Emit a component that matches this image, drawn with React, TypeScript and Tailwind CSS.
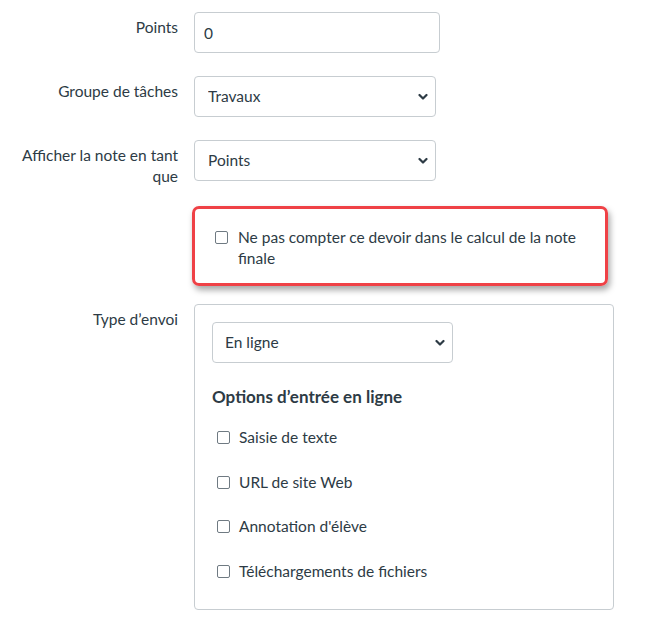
import React from "react";

function Chevron() {
  return (
    <svg
      className="pointer-events-none absolute right-[8px] top-1/2 -translate-y-1/2"
      width="10"
      height="7"
      viewBox="0 0 10 7"
      fill="none"
    >
      <path d="M1.5 1.5L5 5L8.5 1.5" stroke="#2d3b45" strokeWidth="2.2" strokeLinecap="round" strokeLinejoin="round" />
    </svg>
  );
}

function Select({ value, className, padLeft }: { value: string; className: string; padLeft: string }) {
  return (
    <div className={`relative ${className}`}>
      <select
        defaultValue={value}
        className={`h-[41px] w-full appearance-none rounded-[4px] border border-[#c7cdd1] bg-white ${padLeft} pr-8 text-[15.5px] text-[#2d3b45] outline-none`}
      >
        <option>{value}</option>
      </select>
      <Chevron />
    </div>
  );
}

function Box() {
  return <span className="mt-[4px] block h-[13px] w-[13px] shrink-0 rounded-[2px] border border-[#6f7a82] bg-white" />;
}

function Check({ label }: { label: string }) {
  return (
    <label className="flex items-start gap-[9px] pl-[5px]">
      <Box />
      <span>{label}</span>
    </label>
  );
}

function Row({ label, children, className = "" }: { label?: string; children: React.ReactNode; className?: string }) {
  return (
    <div className={`flex gap-4 ${className}`}>
      <div className="w-[178px] shrink-0 pl-4 pt-[5px] text-right">{label}</div>
      <div>{children}</div>
    </div>
  );
}

export default function App() {
  return (
    <div className="min-h-screen bg-white pt-3 font-['Lato','Noto_Sans',sans-serif] text-[15.5px] leading-[21px] text-[#2d3b45]">
      <Row label="Points">
        <input
          defaultValue="0"
          className="h-[41px] w-[246px] rounded-[4px] border border-[#c7cdd1] px-[9px] text-[15.5px] text-[#2d3b45] outline-none"
        />
      </Row>

      <Row label="Groupe de tâches" className="mt-[23px]">
        <Select value="Travaux" className="w-[242px]" padLeft="pl-[13px]" />
      </Row>

      <Row label="Afficher la note en tant que" className="mt-[23px]">
        <Select value="Points" className="w-[242px]" padLeft="pl-[13px]" />
      </Row>

      {/* highlighted option */}
      <Row className="mt-[19px]">
        <div className="-ml-[2px] h-[80px] w-[416px] rounded-[7px] border-[3px] border-[#ef4146] pl-[20px] pt-[18px] shadow-[2px_4px_6px_rgba(0,0,0,0.35)]">
          <label className="flex items-start gap-[10px]">
            <Box />
            <span className="w-[350px]">Ne pas compter ce devoir dans le calcul de la note finale</span>
          </label>
        </div>
      </Row>

      <Row label="Type d’envoi" className="mt-[18px]">
        <div className="h-[306px] w-[420px] rounded-[4px] border border-[#c7cdd1] pl-[17px] pt-[17px]">
          <Select value="En ligne" className="w-[241px]" padLeft="pl-[12px]" />
          <h3 className="mt-[22px] text-[17px] font-bold leading-[24px]">Options d’entrée en ligne</h3>
          <div className="mt-[18px] flex flex-col gap-[23.5px]">
            <Check label="Saisie de texte" />
            <Check label="URL de site Web" />
            <Check label="Annotation d'élève" />
            <Check label="Téléchargements de fichiers" />
          </div>
        </div>
      </Row>
    </div>
  );
}
